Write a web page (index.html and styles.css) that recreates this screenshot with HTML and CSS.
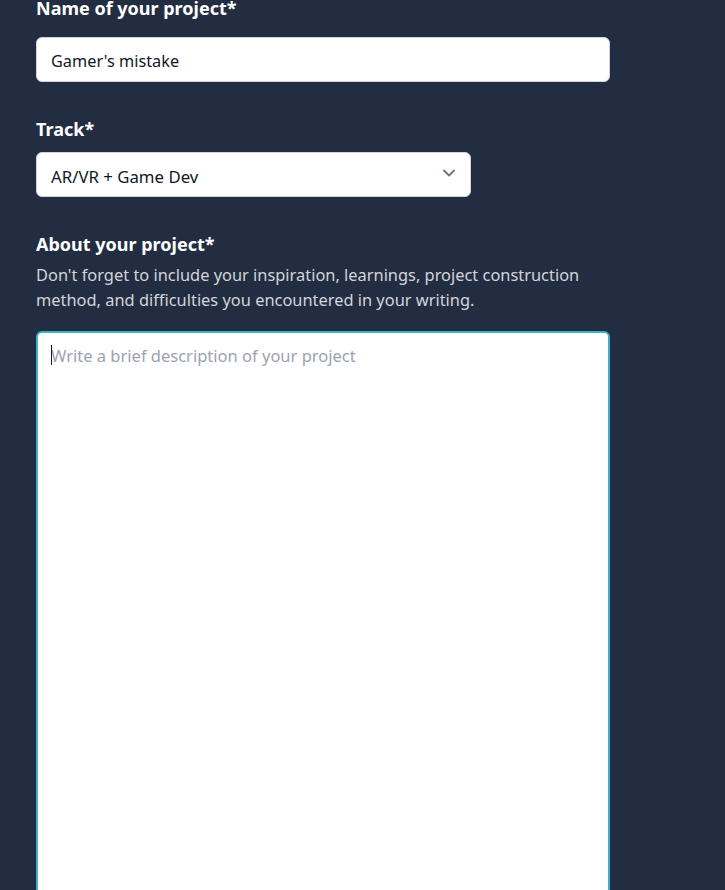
FILE: index.html
```html
<!DOCTYPE html>
<html lang="en">
<head>
<meta charset="utf-8">
<title>Project form</title>
<link rel="stylesheet" href="styles.css">
</head>
<body>
<form class="form">
  <div class="field">
    <label class="label label--first" for="name">Name of your project*</label>
    <input class="input" id="name" type="text" value="Gamer's mistake">
  </div>
  <div class="field">
    <label class="label" for="track">Track*</label>
    <div class="select-wrap">
      <select class="select" id="track">
        <option>AR/VR + Game Dev</option>
      </select>
      <svg class="chevron" width="12" height="8" viewBox="0 0 12 8" aria-hidden="true"><path d="M1 1.5L6 6.5L11 1.5" fill="none" stroke="#6b7280" stroke-width="1.8" stroke-linecap="round" stroke-linejoin="round"/></svg>
    </div>
  </div>
  <div class="field">
    <label class="label label--tight" for="about">About your project*</label>
    <p class="hint">Don't forget to include your inspiration, learnings, project construction method, and difficulties you encountered in your writing.</p>
    <div class="textarea-wrap">
      <textarea class="textarea" id="about" placeholder="Write a brief description of your project"></textarea>
      <span class="caret"></span>
    </div>
  </div>
</form>
</body>
</html>
```
FILE: styles.css
```css
html, body {
  margin: 0;
  background: #232d42;
}
body {
  font-family: "Noto Sans", "Open Sans", sans-serif;
  overflow: hidden;
}
.form {
  width: 574px;
  padding: 0 0 0 36px;
  margin-top: -6px;
}
.field {
  display: flex;
  flex-direction: column;
  margin-bottom: 33px;
}
.label {
  display: block;
  color: #ffffff;
  font-size: 18px;
  font-weight: 700;
  line-height: 28px;
  margin-bottom: 9px;
}
.label--first { margin-bottom: 15px; }
.label--tight { margin-bottom: 5px; }
.input, .select {
  box-sizing: border-box;
  height: 45px;
  border: 1px solid #d1d5db;
  border-radius: 6px;
  background: #ffffff;
  padding: 2px 14px 0;
  font-family: inherit;
  font-size: 16.3px;
  color: #111827;
  outline: none;
}
.input { width: 574px; }
.select-wrap {
  position: relative;
  width: 435px;
}
.select {
  width: 100%;
  appearance: none;
  -webkit-appearance: none;
  font-size: 16.8px;
  padding-top: 3px;
}
.chevron {
  position: absolute;
  right: 16px;
  top: 17px;
  pointer-events: none;
}
.hint {
  margin: 0 0 19px;
  color: #d1d5db;
  font-size: 16.4px;
  line-height: 24.5px;
}
.textarea-wrap {
  position: relative;
}
.textarea {
  display: block;
  box-sizing: border-box;
  width: 574px;
  height: 620px;
  border: 2px solid #3bb3c4;
  border-radius: 6px;
  background: #ffffff;
  padding: 11px 13px;
  font-family: inherit;
  font-size: 16.5px;
  line-height: 24px;
  color: #111827;
  resize: none;
  outline: none;
}
.textarea::placeholder { color: #9ca3af; }
.caret {
  position: absolute;
  left: 15px;
  top: 14px;
  width: 1px;
  height: 20px;
  background: #111827;
}
```
